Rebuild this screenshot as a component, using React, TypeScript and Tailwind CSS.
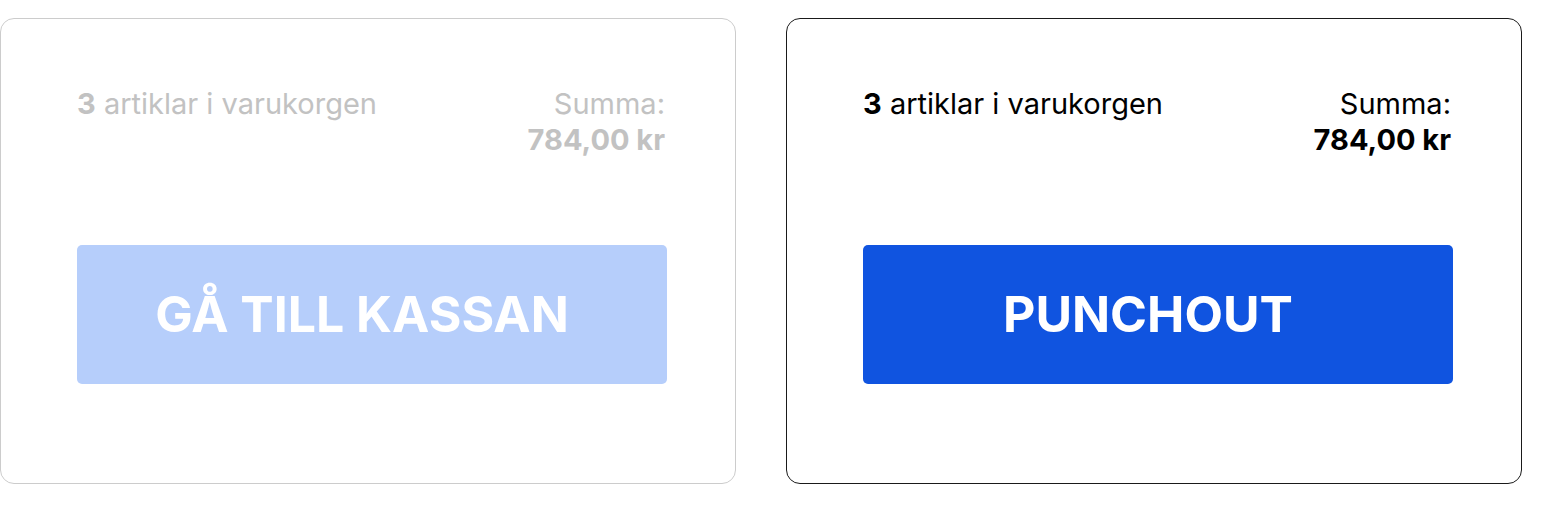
import React from 'react';

interface CartSummaryProps {
  count: number;
  total: string;
  action: string;
  disabled?: boolean;
}

function CartSummary({ count, total, action, disabled }: CartSummaryProps) {
  return (
    <div
      className={
        'w-[736px] h-[466px] rounded-[14px] border bg-white pl-[76px] pr-[68px] pt-[67px] ' +
        (disabled ? 'border-[#cccccc] text-[#c2c2c2]' : 'border-[#1a1a1a] text-black')
      }
    >
      {/* Summary row */}
      <div className="mr-[2px] flex items-start justify-between text-[29px] leading-[36px]">
        <p>
          <span className="font-bold">{count}</span> artiklar i varukorgen
        </p>
        <div className="text-right">
          <p>Summa:</p>
          <p className="font-bold">{total}</p>
        </div>
      </div>

      {/* Checkout button */}
      <button
        disabled={disabled}
        className={
          'mt-[87px] flex h-[139px] w-full items-center justify-center rounded-[5px] pr-[20px] text-[50px] font-bold text-white ' +
          (disabled ? 'bg-[#b6cefb]' : 'bg-[#1054e0]')
        }
      >
        {action}
      </button>
    </div>
  );
}

export default function App() {
  return (
    <div
      className="flex gap-[50px] bg-white pt-[18px] h-[516px] w-[1547px]"
      style={{ fontFamily: 'Inter, "Noto Sans", sans-serif' }}
    >
      <CartSummary count={3} total="784,00 kr" action="GÅ TILL KASSAN" disabled />
      <CartSummary count={3} total="784,00 kr" action="PUNCHOUT" />
    </div>
  );
}
